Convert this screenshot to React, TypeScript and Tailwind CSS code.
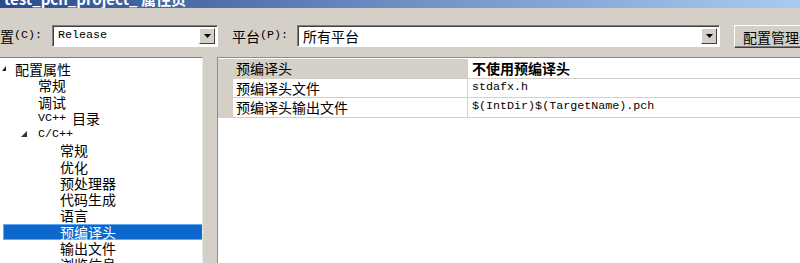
import React from "react";

const cjk = '"Noto Sans CJK SC", "Noto Sans", sans-serif';
const mono = '"Liberation Mono", "Noto Sans CJK SC", monospace';

// Latin text in the classic SimSun look: half-width mono
function M({ children }: { children: React.ReactNode }) {
  return (
    <span className="text-[11.7px]" style={{ fontFamily: mono }}>
      {children}
    </span>
  );
}

function DropButton() {
  return (
    <div className="w-[16px] h-full shrink-0 bg-[#d4d0c8] border border-t-white border-l-white border-b-[#404040] border-r-[#404040] flex items-center justify-center">
      <svg width="7" height="4" viewBox="0 0 7 4">
        <path d="M0 0h7L3.5 4z" fill="#000" />
      </svg>
    </div>
  );
}

function Combo({ width, children }: { width: string; children: React.ReactNode }) {
  return (
    <div
      className={`${width} shrink-0 h-[22px] bg-white border border-t-[#808080] border-l-[#808080] border-b-white border-r-white shadow-[inset_1px_1px_0_#404040] flex items-stretch p-[2px]`}
    >
      <div className="flex-1 flex items-center pl-[3px] text-[14px] text-black leading-none">{children}</div>
      <DropButton />
    </div>
  );
}

const tree: { text: React.ReactNode; indent: string; arrow?: "root" | "open"; selected?: boolean }[] = [
  { text: "配置属性", indent: "pl-[15px]", arrow: "root" },
  { text: "常规", indent: "pl-[38px]" },
  { text: "调试", indent: "pl-[38px]" },
  { text: <><M>VC++</M><span className="ml-[6px]">目录</span></>, indent: "pl-[38px]" },
  { text: <M>C/C++</M>, indent: "pl-[38px]", arrow: "open" },
  { text: "常规", indent: "pl-[60px]" },
  { text: "优化", indent: "pl-[60px]" },
  { text: "预处理器", indent: "pl-[60px]" },
  { text: "代码生成", indent: "pl-[60px]" },
  { text: "语言", indent: "pl-[60px]" },
  { text: "预编译头", indent: "pl-[60px]", selected: true },
  { text: "输出文件", indent: "pl-[60px]" },
  { text: "浏览信息", indent: "pl-[60px]" },
];

const props = [
  { name: "预编译头", value: <span className="font-bold text-[14px]">不使用预编译头</span>, active: true },
  { name: "预编译头文件", value: <M>stdafx.h</M> },
  { name: "预编译头输出文件", value: <M>$(IntDir)$(TargetName).pch</M> },
];

export default function App() {
  return (
    <div className="w-[800px] h-[263px] overflow-hidden bg-[#d4d0c8] flex flex-col text-black" style={{ fontFamily: cjk }}>
      {/* title bar, only its lower edge is in the shot */}
      <div className="h-[8px] overflow-hidden bg-linear-to-r from-[#2a4c8f] via-[#6f8fc4] to-[#a9cbf1] shrink-0">
        <div className="-mt-[9px] pl-[4px] text-white font-bold text-[15px] leading-[16px] whitespace-nowrap">
          test_pch_project_ 属性页
        </div>
      </div>

      {/* configuration / platform row */}
      <div className="h-[49px] shrink-0 flex items-start pt-[17px] whitespace-nowrap">
        <div className="-ml-[14px] w-[66px] shrink-0 h-[22px] flex items-center text-[14px] leading-none">
          配置<M>(C):</M>
        </div>
        <Combo width="w-[166px]">
          <M>Release</M>
        </Combo>
        <div className="ml-[14px] w-[65px] shrink-0 h-[22px] flex items-center text-[14px] leading-none">
          平台<M>(P):</M>
        </div>
        <Combo width="w-[423px]">所有平台</Combo>
        <div className="ml-[14px] w-[110px] h-[23px] shrink-0 bg-[#d4d0c8] border border-t-white border-l-white border-b-[#404040] border-r-[#404040] shadow-[inset_-1px_-1px_0_#808080] flex items-center pl-[8px] text-[14px] leading-none">
          配置管理器...
        </div>
      </div>

      {/* panels */}
      <div className="flex-1 flex min-h-0">
        <div className="w-[203px] shrink-0 bg-white border-t border-t-[#808080] border-r border-r-[#e8e8e8] pt-[3px] overflow-hidden">
          {tree.map((item, i) => (
            <div key={i} className="h-[16.25px] relative">
              {item.arrow === "root" && (
                <svg className="absolute left-[2px] top-[5px]" width="4" height="5" viewBox="0 0 4 5">
                  <path d="M4 0v5H0z" fill="#222" />
                </svg>
              )}
              {item.arrow === "open" && (
                <svg className="absolute left-[21px] top-[5px]" width="6" height="6" viewBox="0 0 6 6">
                  <path d="M6 0v6H0z" fill="#333" />
                </svg>
              )}
              <div
                className={`h-full flex items-center text-[14px] leading-[14px] whitespace-nowrap ${item.indent} ${
                  item.selected ? "ml-[3px] -mr-[2px] bg-[#0c68cc] border border-[#63a8ee] text-white" : ""
                }`}
                style={item.selected ? { paddingLeft: 56 } : undefined}
              >
                {item.text}
              </div>
            </div>
          ))}
        </div>

        <div className="w-[14px] shrink-0 bg-[#d4d0c8]" />

        <div className="flex-1 bg-white border-t border-l border-[#8c8c8c] pt-[1px] min-w-0">
          {props.map((p, i) => (
            <div key={i} className="h-[19.5px] flex border-b border-[#d4d0c8]">
              <div className="w-[15px] shrink-0 bg-[#d4d0c8]" />
              <div
                className={`w-[235px] shrink-0 flex items-center pl-[3px] text-[14px] leading-none border-r border-[#d4d0c8] ${
                  p.active ? "bg-[#d4d0c8]" : "bg-white"
                }`}
              >
                {p.name}
              </div>
              <div className="flex-1 flex items-center pl-[4px] leading-none whitespace-nowrap">{p.value}</div>
            </div>
          ))}
        </div>
      </div>
    </div>
  );
}
